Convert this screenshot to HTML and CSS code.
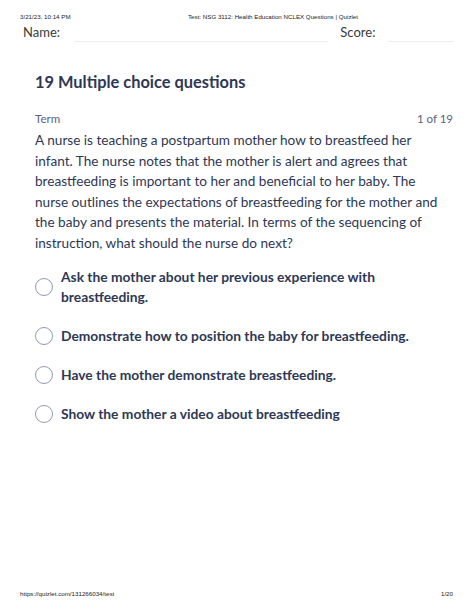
FILE: index.html
```html
<!DOCTYPE html>
<html>
<head>
<meta charset="utf-8">
<link rel="stylesheet" href="styles.css">
</head>
<body>
<div class="page">
  <header class="print-head">
    <span class="date">3/21/23, 10:14 PM</span>
    <span class="doc-title">Test: NSG 3112: Health Education NCLEX Questions | Quizlet</span>
  </header>
  <div class="name-row">
    <span class="label">Name:</span>
    <span class="line line-name"></span>
    <span class="label">Score:</span>
    <span class="line line-score"></span>
  </div>
  <main class="content">
    <h1 class="heading">19 Multiple choice questions</h1>
    <div class="term-row">
      <span class="term">Term</span>
      <span class="count">1 of 19</span>
    </div>
    <p class="question">A nurse is teaching a postpartum mother how to breastfeed her infant. The nurse notes that the mother is alert and agrees that breastfeeding is important to her and beneficial to her baby. The nurse outlines the expectations of breastfeeding for the mother and the baby and presents the material. In terms of the sequencing of instruction, what should the nurse do next?</p>
    <ul class="options">
      <li class="option"><span class="radio"></span><span class="opt-text">Ask the mother about her previous experience with breastfeeding.</span></li>
      <li class="option"><span class="radio"></span><span class="opt-text">Demonstrate how to position the baby for breastfeeding.</span></li>
      <li class="option"><span class="radio"></span><span class="opt-text">Have the mother demonstrate breastfeeding.</span></li>
      <li class="option"><span class="radio"></span><span class="opt-text">Show the mother a video about breastfeeding</span></li>
    </ul>
  </main>
  <footer class="print-foot">
    <span>https://quizlet.com/131266034/test</span>
    <span>1/20</span>
  </footer>
</div>
</body>
</html>
```

FILE: styles.css
```css
* { box-sizing: border-box; }
html, body { margin: 0; padding: 0; background: #fff; }
.page {
  width: 474px;
  height: 613px;
  display: flex;
  flex-direction: column;
  padding: 0 21px 0 20px;
  color: #2e3856;
}
.print-head {
  display: flex;
  font-family: "Liberation Sans", Arial, sans-serif;
  font-size: 6.2px;
  color: #222;
  padding-top: 13px;
  height: 22px;
}
.date { width: 168px; }
.name-row {
  display: flex;
  align-items: flex-end;
  font-family: "Lato", sans-serif;
  font-size: 13px;
  color: #3a3a3a;
  padding-left: 3px;
  height: 18px;
}
.label { line-height: 16px; }
.line { border-bottom: 1px solid #eceef0; height: 1px; margin-bottom: -2px; }
.line-name { width: 256px; margin-left: 14px; margin-right: 12px; }
.line-score { width: 65px; margin-left: 13px; }
.content {
  flex: 1;
  padding: 0 0 0 15px;
  width: 433px;
  font-family: "Lato", sans-serif;
}
.heading {
  margin: 31px 0 0 0;
  font-size: 16.4px;
  font-weight: 700;
  line-height: 22px;
  color: #2e3856;
}
.term-row {
  display: flex;
  justify-content: space-between;
  width: 418px;
  margin-top: 18px;
  font-size: 11.5px;
  color: #586380;
  line-height: 16px;
}
.question {
  margin: 3px 0 0 0;
  width: 408px;
  font-size: 13.6px;
  line-height: 20.6px;
  color: #2e3856;
}
.options {
  list-style: none;
  margin: 13px 0 0 0;
  padding: 0;
}
.option {
  display: flex;
  align-items: center;
  gap: 8px;
  margin-bottom: 19px;
}
.radio {
  flex: none;
  width: 18px;
  height: 18px;
  border: 1.5px solid #939bb4;
  border-radius: 50%;
}
.opt-text {
  font-size: 13.8px;
  font-weight: 700;
  line-height: 20px;
  color: #2e3856;
}
.print-foot {
  display: flex;
  justify-content: space-between;
  font-family: "Liberation Sans", Arial, sans-serif;
  font-size: 6.2px;
  color: #222;
  padding-bottom: 16px;
}
```
